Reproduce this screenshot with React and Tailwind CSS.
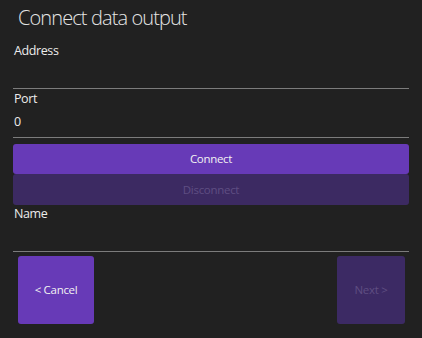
export default function App() {
  return (
    <div
      className="w-[422px] h-[338px] bg-[#212121] text-[#ececec] overflow-hidden"
      style={{ fontFamily: '"Open Sans", "Noto Sans", sans-serif' }}
    >
      <div className="mt-[4px] h-[28px] leading-[28px] pl-[18px] text-[20px] font-light tracking-[-0.9px] text-[#e6e6e6]">
        Connect data output
      </div>
      <div className="px-[13px] flex flex-col">
        <div className="mt-[10px] h-[18px] leading-[18px] text-[12.5px] tracking-[-0.4px] pl-[1px]">Address</div>
        <div className="h-[28px]"></div>
        <div className="h-[1px] bg-[#7c7c7c]"></div>
        <div className="mt-[1px] h-[18px] leading-[18px] text-[12.5px] tracking-[-0.4px] pl-[1px]">Port</div>
        <div className="mt-[5px] h-[18px] leading-[18px] text-[12.5px] pl-[1px]">0</div>
        <div className="h-[6px]"></div>
        <div className="h-[1px] bg-[#7c7c7c]"></div>
        <div className="mt-[6px] h-[30px] rounded-[3px] bg-[#673ab7] flex items-center justify-center text-[11.5px] tracking-[-0.3px] text-[#f2f2f2]">
          Connect
        </div>
        <div className="h-[31px] rounded-[3px] bg-[#3c2a62] flex items-center justify-center text-[11.5px] tracking-[-0.3px] text-[#5f4e82]">
          Disconnect
        </div>
        <div className="h-[18px] leading-[18px] text-[12.5px] tracking-[-0.4px] pl-[1px]">Name</div>
        <div className="h-[28px]"></div>
        <div className="h-[1px] bg-[#7c7c7c]"></div>
        <div className="mt-[4px] flex justify-between pl-[5px] pr-[4px]">
          <div className="w-[76px] h-[68px] rounded-[3px] bg-[#673ab7] flex items-center justify-center text-[11.5px] tracking-[-0.3px] text-[#f2f2f2]">
            &lt; Cancel
          </div>
          <div className="w-[68px] h-[68px] rounded-[3px] bg-[#3c2a64] flex items-center justify-center text-[11.5px] tracking-[-0.3px] text-[#5f4e82]">
            Next &gt;
          </div>
        </div>
      </div>
    </div>
  );
}
